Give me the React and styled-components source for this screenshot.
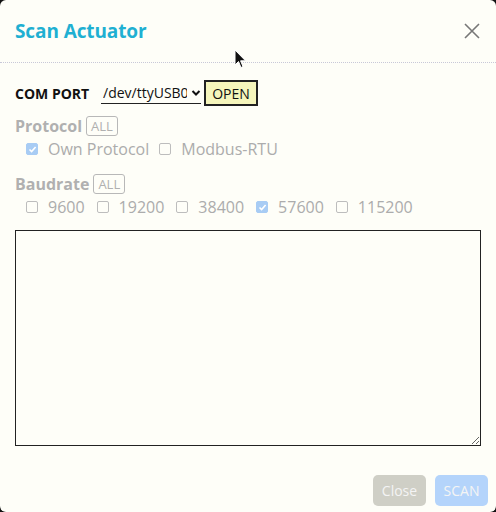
import React from 'react';
import styled, { createGlobalStyle } from 'styled-components';

const GlobalStyle = createGlobalStyle`
    html, body {
        margin: 0;
        background: #111;
    }
    body {
        font-family: 'Open Sans', 'Noto Sans', sans-serif;
    }
`;

const Modal = styled.div`
    position: relative;
    width: 496px;
    height: 512px;
    background: #fefef8;
    border-radius: 6px;
    display: flex;
    flex-direction: column;
    overflow: hidden;
`;

const Header = styled.div`
    height: 63px;
    box-sizing: border-box;
    padding: 0 15px;
    display: flex;
    align-items: center;
    justify-content: space-between;
    border-bottom: 1px dotted #c8c8d8;
`;

const Title = styled.h5`
    margin: 0;
    font-size: 19px;
    font-weight: 700;
    color: #1fb0d2;
    letter-spacing: -0.1px;
`;

const CloseX = styled.button`
    border: none;
    background: none;
    padding: 0;
    width: 18px;
    height: 18px;
    display: flex;
    align-items: center;
    justify-content: center;
`;

const Body = styled.div`
    padding: 17px 15px 0;
    display: flex;
    flex-direction: column;
`;

const PortRow = styled.div`
    display: flex;
    align-items: center;
    height: 26px;
`;

const PortLabel = styled.span`
    font-size: 14px;
    font-weight: 700;
    color: #111;
    width: 86px;
`;

const Select = styled.div`
    width: 100px;
    height: 22px;
    box-sizing: border-box;
    border-bottom: 1px solid #222;
    display: flex;
    align-items: center;
    justify-content: space-between;
    font-size: 14px;
    color: #111;
    padding-left: 2px;
    white-space: nowrap;
`;

const SelectText = styled.span`
    width: 84px;
    overflow: hidden;
`;

const OpenButton = styled.button`
    margin-left: 3px;
    height: 26px;
    width: 54px;
    box-sizing: border-box;
    border: 2px solid #222;
    background: #f6f6bc;
    font-family: inherit;
    font-size: 14px;
    color: #111;
    padding: 0;
`;

const Section = styled.div`
    margin-top: ${p => p.$top}px;
    display: flex;
    flex-direction: column;
`;

const SectionHead = styled.div`
    display: flex;
    align-items: center;
    gap: 4px;
    height: 20px;
`;

const SectionLabel = styled.span`
    font-size: 16px;
    font-weight: 700;
    color: #b0b0b0;
`;

const AllBadge = styled.span`
    font-size: 13px;
    color: #b0b0b0;
    border: 1px solid #b8b8b8;
    border-radius: 3px;
    padding: 0 4px;
    height: 18px;
    line-height: 18px;
`;

const OptionRow = styled.div`
    display: flex;
    align-items: center;
    gap: ${p => p.$gap}px;
    padding-left: 11px;
    height: 22px;
    margin-top: 2px;
`;

const Option = styled.label`
    display: flex;
    align-items: center;
    gap: 10px;
    font-size: 16px;
    color: #acacac;
`;

const Box = styled.span`
    width: 12px;
    height: 12px;
    box-sizing: border-box;
    border-radius: 2px;
    border: 1px solid ${p => (p.$checked ? '#a8ccf4' : '#bdbdbd')};
    background: ${p => (p.$checked ? '#a8ccf4' : 'transparent')};
    display: flex;
    align-items: center;
    justify-content: center;
`;

const Output = styled.textarea`
    margin-top: 12px;
    width: 466px;
    height: 216px;
    box-sizing: border-box;
    border: 1.5px solid #222;
    background: transparent;
    resize: both;
`;

const Footer = styled.div`
    margin-top: auto;
    padding: 0 8px 6px 0;
    display: flex;
    justify-content: flex-end;
    gap: 9px;
`;

const FootButton = styled.button`
    height: 31px;
    width: 53px;
    border: none;
    border-radius: 5px;
    background: ${p => p.$bg};
    color: #f4f4f4;
    font-family: inherit;
    font-size: 14px;
    padding: 0;
`;

const Cursor = styled.svg`
    position: absolute;
    left: 234px;
    top: 49px;
`;

const Check = () => (
    <svg width="9" height="9" viewBox="0 0 9 9">
        <path d="M1.5 4.5 L3.6 6.6 L7.6 2" stroke="#fff" strokeWidth="1.6" fill="none" />
    </svg>
);

const CheckOption = ({ label, checked }) => (
    <Option>
        <Box $checked={checked}>{checked && <Check />}</Box>
        {label}
    </Option>
);

const App = () => {
    return (
        <>
            <GlobalStyle />
            <Modal>
                <Header>
                    <Title>Scan Actuator</Title>
                    <CloseX>
                        <svg width="16" height="16" viewBox="0 0 16 16">
                            <path d="M1 1 L15 15 M15 1 L1 15" stroke="#777" strokeWidth="1.6" />
                        </svg>
                    </CloseX>
                </Header>
                <Body>
                    <PortRow>
                        <PortLabel>COM PORT</PortLabel>
                        <Select>
                            <SelectText>/dev/ttyUSB0</SelectText>
                            <svg width="10" height="8" viewBox="0 0 10 8">
                                <path d="M1.5 2 L5 5.5 L8.5 2" stroke="#111" strokeWidth="2" fill="none" />
                            </svg>
                        </Select>
                        <OpenButton>OPEN</OpenButton>
                    </PortRow>
                    <Section $top={10}>
                        <SectionHead>
                            <SectionLabel>Protocol</SectionLabel>
                            <AllBadge>ALL</AllBadge>
                        </SectionHead>
                        <OptionRow $gap={10}>
                            <CheckOption label="Own Protocol" checked />
                            <CheckOption label="Modbus-RTU" />
                        </OptionRow>
                    </Section>
                    <Section $top={14}>
                        <SectionHead>
                            <SectionLabel>Baudrate</SectionLabel>
                            <AllBadge>ALL</AllBadge>
                        </SectionHead>
                        <OptionRow $gap={12}>
                            <CheckOption label="9600" />
                            <CheckOption label="19200" />
                            <CheckOption label="38400" />
                            <CheckOption label="57600" checked />
                            <CheckOption label="115200" />
                        </OptionRow>
                    </Section>
                    <Output readOnly />
                </Body>
                <Footer>
                    <FootButton $bg="#cfcfc6">Close</FootButton>
                    <FootButton $bg="#b4d4fb">SCAN</FootButton>
                </Footer>
                <Cursor width="14" height="22" viewBox="0 0 14 22">
                    <path d="M1 1 L1 16 L4.5 12.5 L7 18.5 L9 17.6 L6.6 11.8 L11.5 11.8 Z" fill="#111" stroke="#fff" strokeWidth="1" />
                </Cursor>
            </Modal>
        </>
    );
};

export default App;
